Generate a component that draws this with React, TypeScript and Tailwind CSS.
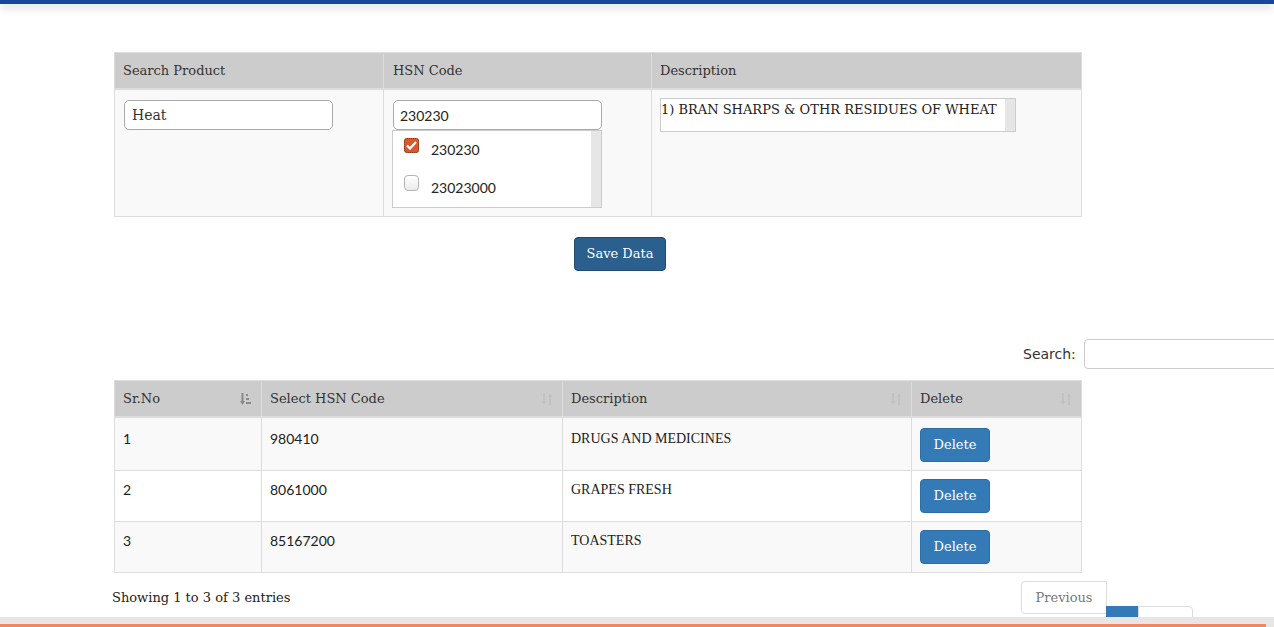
import React from "react";

const slab = "font-['DejaVu_Serif',serif]";

function SortIcon({ active }: { active?: boolean }) {
  if (active) {
    return (
      <svg width="11" height="14" viewBox="0 0 11 14" className="text-[#8a8a8a]">
        <path d="M2.5 1v10" stroke="currentColor" strokeWidth="2" />
        <path d="M0 9l2.5 4 2.5-4z" fill="currentColor" />
        <rect x="6" y="2" width="2" height="2" fill="currentColor" />
        <rect x="6" y="6" width="3" height="2" fill="currentColor" />
        <rect x="6" y="10" width="5" height="2" fill="currentColor" />
      </svg>
    );
  }
  return (
    <svg width="12" height="14" viewBox="0 0 12 14" className="text-[#c2c2c2]">
      <path d="M3 1v10" stroke="currentColor" strokeWidth="2" />
      <path d="M0.5 9l2.5 4 2.5-4z" fill="currentColor" />
      <path d="M9 3v10" stroke="currentColor" strokeWidth="2" />
      <path d="M6.5 5l2.5-4 2.5 4z" fill="currentColor" />
    </svg>
  );
}

function CheckRow({ checked, label }: { checked?: boolean; label: string }) {
  return (
    <div className="flex items-start h-[38px] pl-[11px]">
      {checked ? (
        <span className="mt-[7px] w-[15px] h-[15px] rounded-[3px] bg-[#d65a2e] border border-dotted border-[#7a2d12] flex items-center justify-center">
          <svg width="11" height="9" viewBox="0 0 11 9">
            <path d="M1 4.5l3 3L10 1" stroke="white" strokeWidth="2.2" fill="none" />
          </svg>
        </span>
      ) : (
        <span className="mt-[6px] w-[15px] h-[16px] rounded-[4px] border border-[#b5b5b5] bg-gradient-to-b from-white to-[#ececec]" />
      )}
      <span className="ml-[12px] mt-[9px] leading-[20px] text-[14px] text-[#222] font-['Lato',sans-serif]">{label}</span>
    </div>
  );
}

const rows = [
  { n: "1", code: "980410", desc: "DRUGS AND MEDICINES" },
  { n: "2", code: "8061000", desc: "GRAPES FRESH" },
  { n: "3", code: "85167200", desc: "TOASTERS" },
];

export default function App() {
  return (
    <div className={"h-[627px] flex flex-col overflow-hidden bg-white text-[#333] " + slab}>
      <div className="h-[4px] bg-[#17479b] shadow-[0_3px_10px_rgba(0,0,0,0.22)] relative z-10 shrink-0" />

      <div className="flex-1 overflow-hidden">
        <div className="ml-[112px] w-[1082px]">
          {/* entry table */}
          <div className="ml-[2px] mt-[48px] w-[968px] border border-[#ddd] text-[13px]">
            <div className="grid grid-cols-[269px_268px_1fr] bg-[#cccccc] h-[37px] pt-[1px] border-b-[2px] border-[#ddd]">
              <div className="px-[8px] flex items-center border-r border-[#ddd]">Search Product</div>
              <div className="px-[9px] flex items-center border-r border-[#ddd]">HSN Code</div>
              <div className="px-[8px] flex items-center">Description</div>
            </div>
            <div className="grid grid-cols-[269px_268px_1fr] bg-[#f9f9f9] h-[126px]">
              <div className="border-r border-[#ddd] pt-[10px] pl-[9px]">
                <div className="w-[209px] h-[30px] border border-[#aaa] rounded-[5px] bg-white flex items-center px-[7px] text-[14px]">
                  Heat
                </div>
              </div>
              <div className="border-r border-[#ddd] pt-[10px] pl-[9px]">
                <div className="w-[209px] h-[30px] border border-[#aaa] rounded-[5px] bg-white flex items-center px-[6px] text-[14px] font-['Lato',sans-serif] text-[#222]">
                  230230
                </div>
                <div className="w-[210px] h-[78px] -ml-[1px] border border-[#ccc] bg-white flex">
                  <div className="flex-1">
                    <CheckRow checked label="230230" />
                    <CheckRow label="23023000" />
                  </div>
                  <div className="w-[10px] bg-[#e6e6e6]" />
                </div>
              </div>
              <div className="pt-[8px] pl-[8px]">
                <div className="w-[356px] h-[34px] border border-[#ccc] bg-white flex">
                  <div className="flex-1 pt-[1px] text-[13px] leading-[20px] text-[#222] whitespace-nowrap overflow-hidden">
                    1) BRAN SHARPS &amp; OTHR RESIDUES OF WHEAT
                  </div>
                  <div className="w-[10px] bg-[#e6e6e6]" />
                </div>
              </div>
            </div>
          </div>

          <div className="mt-[20px] ml-[462px]">
            <button className="w-[92px] h-[34px] rounded-[4px] bg-[#2b5f8e] border border-[#1f4a72] text-white text-[13px]">
              Save Data
            </button>
          </div>

          {/* search */}
          <div className="mt-[68px] ml-[911px] flex items-center gap-[8px] whitespace-nowrap">
            <span className="font-['DejaVu_Sans',sans-serif] text-[14px] text-[#333]">Search:</span>
            <div className="w-[200px] h-[30px] border border-[#ccc] rounded-[4px] bg-white shrink-0" />
          </div>

          {/* data table */}
          <div className="ml-[2px] mt-[11px] w-[968px] border border-[#ddd] text-[13px]">
            <div className="grid grid-cols-[147px_301px_349px_1fr] bg-[#cccccc] h-[37px] pt-[1px] border-b-[2px] border-[#ddd]">
              <div className="pl-[8px] pr-[10px] flex items-center justify-between border-r border-[#ddd]">
                Sr.No <SortIcon active />
              </div>
              <div className="pl-[8px] pr-[9px] flex items-center justify-between border-r border-[#ddd]">
                Select HSN Code <SortIcon />
              </div>
              <div className="pl-[8px] pr-[9px] flex items-center justify-between border-r border-[#ddd]">
                Description <SortIcon />
              </div>
              <div className="pl-[8px] pr-[9px] flex items-center justify-between">
                Delete <SortIcon />
              </div>
            </div>
            {rows.map((r, i) => {
              const pad = i === 0 ? "pt-[10px]" : "pt-[8px]";
              const txt = i === 0 ? "pt-[11px]" : "pt-[9px]";
              return (
                <div
                  key={r.n}
                  className={
                    "grid grid-cols-[147px_301px_349px_1fr] " +
                    (i === 0 ? "h-[52px] bg-[#f9f9f9]" : i === 1 ? "h-[51px] bg-white border-t border-[#ddd]" : "h-[51px] bg-[#f9f9f9] border-t border-[#ddd]")
                  }
                >
                  <div className={txt + " pl-[8px] border-r border-[#ddd] font-['Lato',sans-serif] text-[14px] leading-[20px] text-[#222]"}>{r.n}</div>
                  <div className={txt + " pl-[8px] border-r border-[#ddd] font-['Lato',sans-serif] text-[14px] leading-[20px] text-[#222]"}>{r.code}</div>
                  <div className={txt + " pl-[8px] border-r border-[#ddd] font-['Liberation_Serif',serif] text-[14px] leading-[20px] text-[#222]"}>{r.desc}</div>
                  <div className={pad + " pl-[8px]"}>
                    <button className="w-[70px] h-[34px] rounded-[4px] bg-[#337ab7] border border-[#2e6da4] text-white text-[13px]">
                      Delete
                    </button>
                  </div>
                </div>
              );
            })}
          </div>

          {/* info + paging */}
          <div className="mt-[8px] flex justify-between">
            <div className="pt-[7px] text-[13px] leading-[20px] text-[#222]">Showing 1 to 3 of 3 entries</div>
            <div className="w-[173px]">
              <div className="w-[86px] h-[33px] pt-[1px] border border-[#ddd] rounded-l-[4px] flex items-center justify-center text-[13px] text-[#777] bg-white">
                Previous
              </div>
              <div className="flex ml-[85px] -mt-[8px]">
                <div className="w-[32px] h-[20px] bg-[#337ab7]" />
                <div className="w-[55px] h-[20px] border border-[#ddd] rounded-tr-[4px] bg-white" />
              </div>
            </div>
          </div>
        </div>
      </div>

      <div className="h-[10px] bg-[#e6e6e6] shrink-0 flex flex-col justify-end">
        <div className="h-[3px] w-[1266px] bg-[#f0875f]" />
      </div>
    </div>
  );
}
